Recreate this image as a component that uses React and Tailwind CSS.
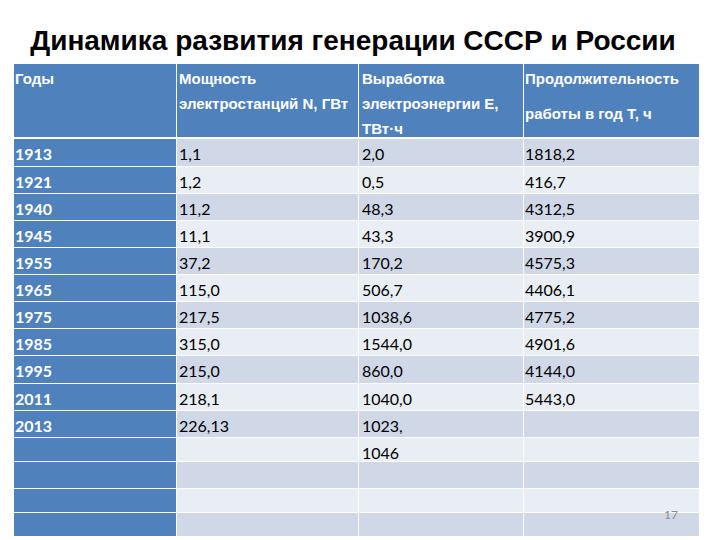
import React from 'react';

const rows = [
  { year: '1913', n: '1,1', e: '2,0', t: '1818,2', h: 'h-[27px]' },
  { year: '1921', n: '1,2', e: '0,5', t: '416,7', h: 'h-[26px]' },
  { year: '1940', n: '11,2', e: '48,3', t: '4312,5', h: 'h-[26px]' },
  { year: '1945', n: '11,1', e: '43,3', t: '3900,9', h: 'h-[26px]' },
  { year: '1955', n: '37,2', e: '170,2', t: '4575,3', h: 'h-[26px]' },
  { year: '1965', n: '115,0', e: '506,7', t: '4406,1', h: 'h-[26px]' },
  { year: '1975', n: '217,5', e: '1038,6', t: '4775,2', h: 'h-[26px]' },
  { year: '1985', n: '315,0', e: '1544,0', t: '4901,6', h: 'h-[26px]' },
  { year: '1995', n: '215,0', e: '860,0', t: '4144,0', h: 'h-[27px]' },
  { year: '2011', n: '218,1', e: '1040,0', t: '5443,0', h: 'h-[26px]' },
  { year: '2013', n: '226,13', e: '1023,', t: '', h: 'h-[26px]' },
  { year: '', n: '', e: '1046', t: '', h: 'h-[23px]' },
  { year: '', n: '', e: '', t: '', h: 'h-[26px]' },
  { year: '', n: '', e: '', t: '', h: 'h-[23px]' },
  { year: '', n: '', e: '', t: '', h: 'h-[23px]' },
];

const cols = 'grid grid-cols-[162px_181px_164px_175px] grid-rows-[minmax(0,1fr)] gap-x-px';

export default function App() {
  return (
    <div className="w-[720px] h-[540px] bg-white relative overflow-hidden">
      {/* title */}
      <div className="h-[64px] pt-[25px] pr-[14px] text-center text-[28px] leading-[32px] font-bold text-black font-['Liberation_Sans',Arial,sans-serif]">
        Динамика развития генерации СССР и России
      </div>

      <div className="ml-[14px] w-[685px] flex flex-col gap-px">
        {/* header */}
        <div className={`${cols} h-[73px] mb-px text-white text-[15px] leading-[25px] font-bold font-['Liberation_Sans',Arial,sans-serif]`}>
          <div className="bg-[#4f81bd] pl-[1px] pt-[2px]">Годы</div>
          <div className="bg-[#4f81bd] pl-[2px] pt-[2px]">
            <div>Мощность</div>
            <div>электростанций N, ГВт</div>
          </div>
          <div className="bg-[#4f81bd] pl-[3px] pt-[2px]">
            <div>Выработка</div>
            <div>электроэнергии Е,</div>
            <div>ТВт·ч</div>
          </div>
          <div className="bg-[#4f81bd] pl-[1px] pt-[2px]">
            <div>Продолжительность</div>
            <div className="mt-[10px]">работы в год Т, ч</div>
          </div>
        </div>

        {rows.map((r, i) => {
          const band = i % 2 === 0 ? 'bg-[#d0d8e8]' : 'bg-[#e9edf4]';
          return (
            <div key={i} className={`${cols} ${r.h} text-[16px] leading-[24px] font-['Lato','Liberation_Sans',sans-serif]`}>
              <div className="bg-[#4f81bd] pl-[1px] pt-[3px] text-white font-bold">{r.year}</div>
              <div className={`${band} pl-[2px] pt-[3px] text-black`}>{r.n}</div>
              <div className={`${band} pl-[3px] pt-[3px] text-black`}>{r.e}</div>
              <div className={`${band} pl-[1px] pt-[3px] text-black`}>{r.t}</div>
            </div>
          );
        })}
      </div>

      {/* slide number */}
      <div className="absolute left-[664px] top-[507px] text-[12px] leading-[16px] text-[#8c8c8c] font-['Lato','Liberation_Sans',sans-serif]">
        17
      </div>
    </div>
  );
}
